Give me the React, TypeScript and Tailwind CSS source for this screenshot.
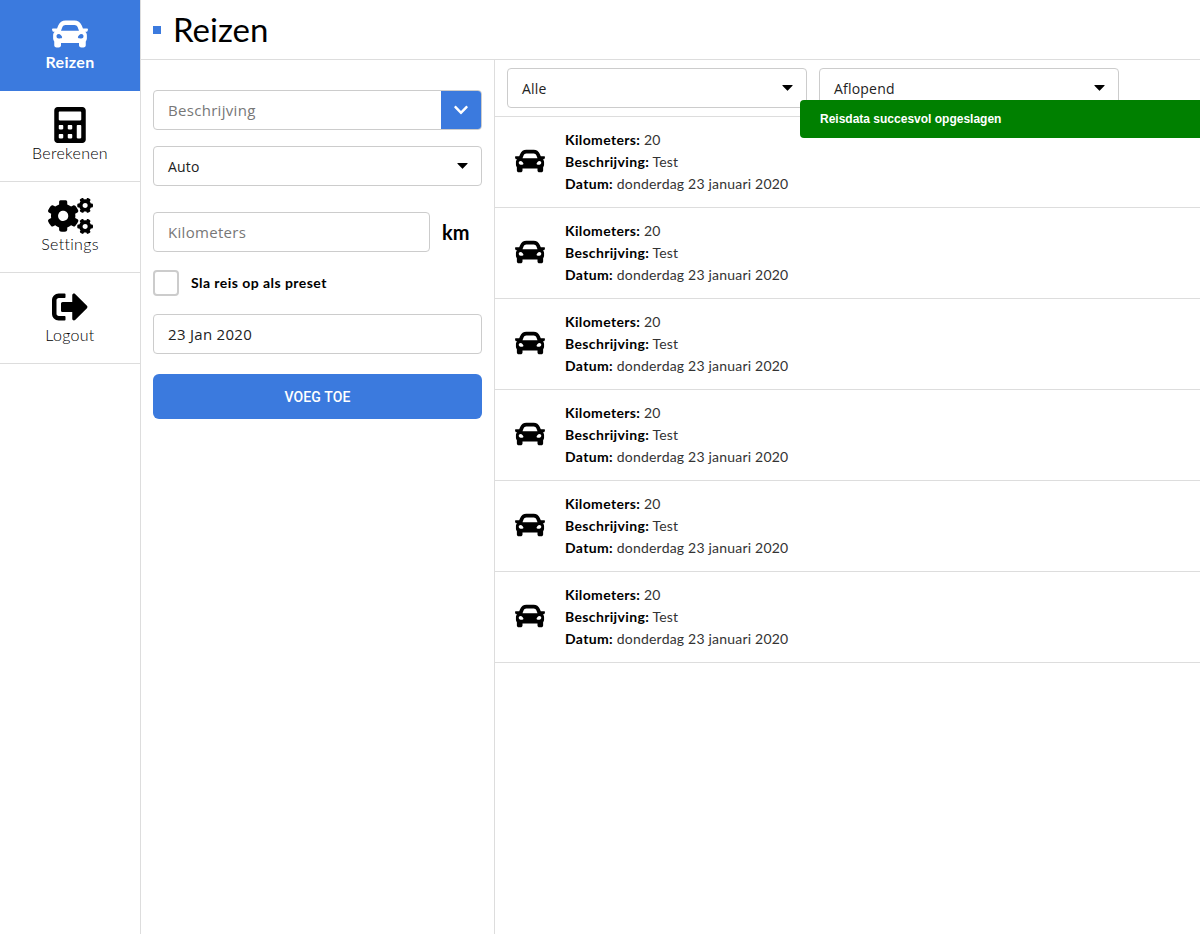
import * as React from "react";
import { FaCalculator, FaCar, FaChevronDown, FaCogs, FaSignOutAlt } from "react-icons/fa";
import { IconType } from "react-icons";

const navItems: { label: string; icon: IconType; size: string; active?: boolean }[] = [
  { label: "Reizen", icon: FaCar, size: "h-9 w-9", active: true },
  { label: "Berekenen", icon: FaCalculator, size: "h-9 w-9" },
  { label: "Settings", icon: FaCogs, size: "h-9 w-[45px]" },
  { label: "Logout", icon: FaSignOutAlt, size: "h-9 w-9" },
];

function Caret() {
  return (
    <svg viewBox="0 0 12 7" className="h-[6px] w-[11px] fill-black">
      <path d="M0.6 0h10.8c.5 0 .8.6.4 1L6.4 6.4c-.2.3-.6.3-.8 0L.2 1C-.2.6.1 0 .6 0z" />
    </svg>
  );
}

function SelectBox({ label, className }: { label: string; className: string }) {
  return (
    <div
      className={`flex h-10 items-center justify-between rounded border border-[#cccccc] bg-white pl-[14px] pr-[13px] font-['Open_Sans'] text-sm tracking-[0.2px] text-[#222222] ${className}`}
    >
      <span className="pt-[2px]">{label}</span>
      <Caret />
    </div>
  );
}

function TripRow() {
  return (
    <div className="flex h-[91px] items-center border-b border-[#dddddd] pl-5">
      <FaCar className="mb-[2px] h-[30px] w-[30px] text-black" />
      <div className="ml-5 font-['Lato'] text-sm leading-[22px] tracking-[0.2px] text-[#333333]">
        <p>
          <b className="font-bold tracking-[0.35px] text-black">Kilometers:</b> 20
        </p>
        <p>
          <b className="font-bold tracking-[0.35px] text-black">Beschrijving:</b> Test
        </p>
        <p>
          <b className="font-bold tracking-[0.35px] text-black">Datum:</b> donderdag 23 januari 2020
        </p>
      </div>
    </div>
  );
}

export default function App() {
  return (
    <div className="relative flex h-[934px] w-[1200px] overflow-hidden bg-white font-['Lato'] text-black">
      <nav className="w-[141px] shrink-0 border-r border-[#dddddd]">
        {navItems.map((item) => {
          const Icon = item.icon;
          return (
            <div
              key={item.label}
              className={`flex h-[91px] flex-col items-center justify-center pb-[3px] ${
                item.active
                  ? "bg-[#3b7ade] font-bold text-white"
                  : "border-b border-[#dddddd] font-light text-black"
              }`}
            >
              <Icon className={item.size} />
              <span className="text-base leading-[20px] tracking-[0.3px]">{item.label}</span>
            </div>
          );
        })}
      </nav>

      <div className="flex min-w-0 flex-1 flex-col">
        <header className="flex h-[60px] shrink-0 items-center border-b border-[#dddddd] pl-3">
          <span className="h-2 w-2 bg-[#3b7ade]" />
          <h1 className="ml-3 text-[33px] leading-none font-normal">Reizen</h1>
        </header>

        <div className="flex min-h-0 flex-1">
          <aside className="w-[354px] shrink-0 border-r border-[#dddddd] px-3 pt-[30px]">
            <div className="flex h-10 w-[329px] items-center justify-between overflow-hidden rounded border border-[#cccccc] font-['Open_Sans'] text-[15px] tracking-[0.3px] text-[#777777]">
              <span className="pl-[14px]">Beschrijving</span>
              <span className="flex h-full w-10 items-center justify-center bg-[#3b7ade] text-white">
                <FaChevronDown className="h-4 w-4" />
              </span>
            </div>
            <SelectBox label="Auto" className="mt-4 w-[329px]" />
            <div className="mt-[26px] flex items-center">
              <div className="flex h-10 w-[277px] items-center rounded border border-[#cccccc] pl-[14px] font-['Open_Sans'] text-[15px] tracking-[0.3px] text-[#777777]">
                Kilometers
              </div>
              <span className="ml-3 text-xl font-bold">km</span>
            </div>
            <label className="mt-[18px] flex items-center">
              <span className="h-[26px] w-[26px] rounded border-2 border-[#cccccc]" />
              <span className="ml-3 text-sm font-bold tracking-[0.45px]">Sla reis op als preset</span>
            </label>
            <div className="mt-[18px] flex h-10 w-[329px] items-center rounded border border-[#cccccc] pl-[14px] font-['Open_Sans'] text-[15px] tracking-[0.3px] text-[#222222]">
              23 Jan 2020
            </div>
            <button className="mt-5 h-[45px] w-[329px] rounded-md bg-[#3b7ade] font-['Roboto'] text-sm font-medium tracking-[0.1px] text-white">
              VOEG TOE
            </button>
          </aside>

          <main className="min-w-0 flex-1">
            <div className="flex h-[57px] gap-3 border-b border-[#dddddd] pl-3 pt-2">
              <SelectBox label="Alle" className="w-[300px]" />
              <SelectBox label="Aflopend" className="w-[300px]" />
            </div>
            {Array.from({ length: 6 }, (_, i) => (
              <TripRow key={i} />
            ))}
          </main>
        </div>
      </div>

      <div className="absolute left-[800px] top-[100px] flex h-[38px] w-[400px] items-center rounded-l bg-[#008000] pl-5 font-['Liberation_Sans'] text-xs font-bold text-white">
        Reisdata succesvol opgeslagen
      </div>
    </div>
  );
}
